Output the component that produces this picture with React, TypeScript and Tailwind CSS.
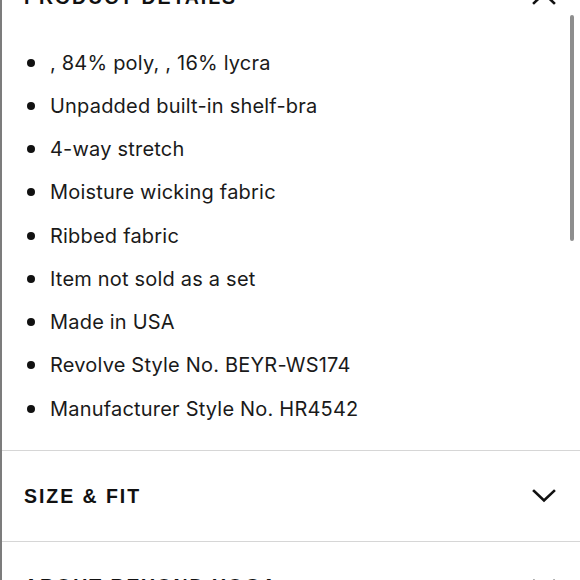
import React from "react";

const items = [
  ", 84% poly, , 16% lycra",
  "Unpadded built-in shelf-bra",
  "4-way stretch",
  "Moisture wicking fabric",
  "Ribbed fabric",
  "Item not sold as a set",
  "Made in USA",
  "Revolve Style No. BEYR-WS174",
  "Manufacturer Style No. HR4542",
];

function Chevron({ up }: { up?: boolean }) {
  return (
    <svg width="24" height="14" viewBox="0 0 24 14" fill="none" className={up ? "rotate-180" : ""}>
      <path d="M2 2 L12 11.5 L22 2" stroke="#111" strokeWidth="2.6" strokeLinecap="square" />
    </svg>
  );
}

function Header({ title, up, h }: { title: string; up?: boolean; h: string }) {
  return (
    <div className={`${h} flex items-center justify-between pl-[22px] pr-[24px]`}>
      <span className="text-[19.5px] font-bold tracking-[0.1em] text-[#111]" style={{ fontFamily: "'Liberation Sans', Arial, sans-serif" }}>
        {title}
      </span>
      <Chevron up={up} />
    </div>
  );
}

export default function App() {
  return (
    <div className="relative w-[580px] h-[580px] overflow-hidden bg-white border-l-2 border-[#7c7c7c]">
      <div className="-mt-[45px]">
        <Header title="PRODUCT DETAILS" up h="h-[86px]" />
        <ul className="pb-[20px]" style={{ fontFamily: "Inter, sans-serif" }}>
          {items.map((t) => (
            <li key={t} className="h-[43.25px] flex items-center text-[20px] tracking-[0.01em] text-[#1a1a1a]">
              <span className="ml-[25px] w-[8px] h-[8px] rounded-full bg-[#111] mr-[15px]" />
              <span>{t}</span>
            </li>
          ))}
        </ul>
        <div className="border-t border-[#d6d6d6]">
          <Header title="SIZE & FIT" h="h-[90px]" />
        </div>
        <div className="border-t border-[#d6d6d6]">
          <Header title="ABOUT BEYOND YOGA" h="h-[88px]" />
        </div>
      </div>
      <div className="absolute right-[6px] top-[15px] w-[4px] h-[226px] rounded-full bg-[#8e8e8e]" />
    </div>
  );
}
